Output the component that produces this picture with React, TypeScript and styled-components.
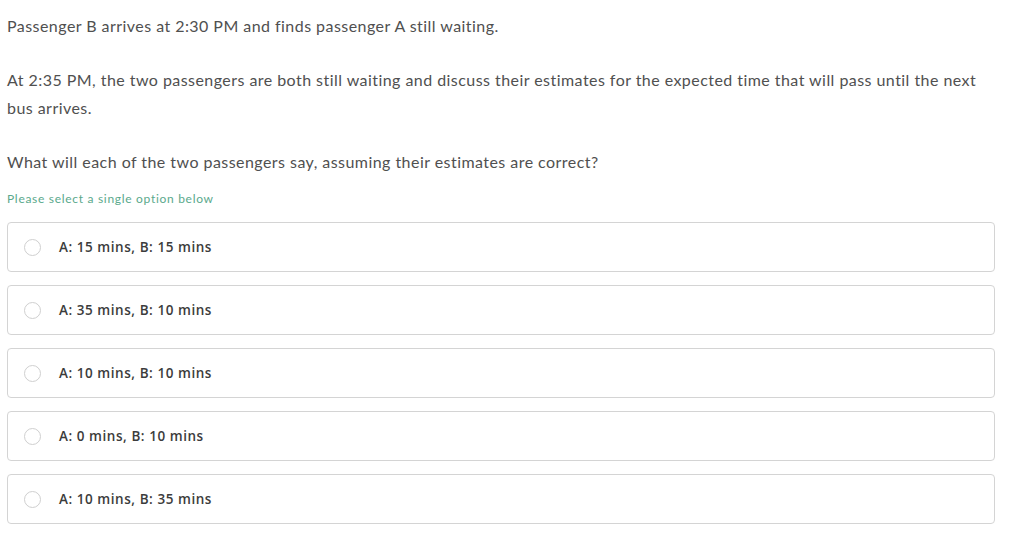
import styled, { createGlobalStyle } from "styled-components";

const options = [
  "A: 15 mins, B: 15 mins",
  "A: 35 mins, B: 10 mins",
  "A: 10 mins, B: 10 mins",
  "A: 0 mins, B: 10 mins",
  "A: 10 mins, B: 35 mins",
];

const GlobalStyle = createGlobalStyle`
  body {
    margin: 0;
    background: #fff;
    font-family: Lato, "Open Sans", sans-serif;
  }
`;

const App: React.FC = () => {
  return (
    <Page>
      <GlobalStyle />
      <Text>Passenger B arrives at 2:30 PM and finds passenger A still waiting.</Text>
      <Text>
        At 2:35 PM, the two passengers are both still waiting and discuss their estimates for the
        expected time that will pass until the next bus arrives.
      </Text>
      <Text>What will each of the two passengers say, assuming their estimates are correct?</Text>
      <Hint>Please select a single option below</Hint>
      <Options>
        {options.map((o) => (
          <Option key={o}>
            <Radio />
            <Label>{o}</Label>
          </Option>
        ))}
      </Options>
    </Page>
  );
};

export default App;

const Page = styled.div`
  width: 988px;
  padding: 12px 0 0 7px;
`;

const Text = styled.p`
  margin: 0 0 26px;
  font-size: 16px;
  line-height: 28px;
  color: #505050;
  letter-spacing: 0.45px;
`;

const Hint = styled.div`
  margin-top: -11px;
  font-size: 12px;
  line-height: 16px;
  color: #5aa98c;
  letter-spacing: 0.7px;
`;

const Options = styled.div`
  display: flex;
  flex-direction: column;
  gap: 13px;
  margin-top: 15px;
`;

const Option = styled.label`
  display: flex;
  align-items: center;
  gap: 18px;
  height: 50px;
  box-sizing: border-box;
  padding: 0 16px;
  border: 1px solid #d4d4d4;
  border-radius: 4px;
  cursor: pointer;
`;

const Radio = styled.span`
  width: 15px;
  height: 15px;
  border: 1px solid #cfcfcf;
  border-radius: 50%;
  flex-shrink: 0;
`;

const Label = styled.span`
  font-family: "Open Sans", Lato, sans-serif;
  font-size: 13.5px;
  font-weight: 600;
  color: #3c3c3c;
  letter-spacing: 0.55px;
`;
